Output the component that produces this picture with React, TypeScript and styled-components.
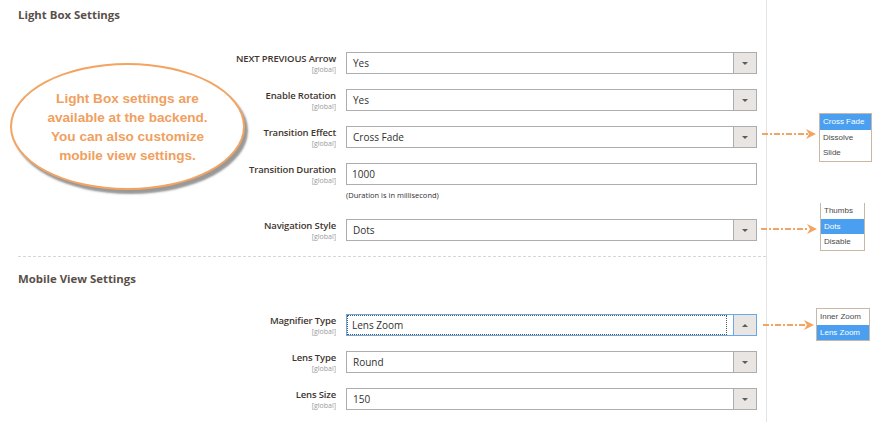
import React from 'react'
import styled, { createGlobalStyle, css } from 'styled-components'

const GlobalStyle = createGlobalStyle`
    html, body {
        margin: 0;
        padding: 0;
        background: #ffffff;
    }
    body {
        font-family: "Open Sans", "Liberation Sans", sans-serif;
        color: #303030;
    }
`;

const Page = styled.div`
    position: relative;
    width: 880px;
    height: 422px;
    overflow: hidden;
    display: flex;
`;

const Main = styled.div`
    width: 748px;
    height: 100%;
    padding-left: 18px;
    border-right: 1px solid #e4e4e4;
`;

const Section = styled.div<{ $divider?: boolean }>`
    padding-right: 9px;
    ${p => p.$divider && css`
        border-bottom: 1px dashed #d6d6d6;
        padding-bottom: 15px;
    `}
`;

const Heading = styled.h2<{ $pad: number; $gap: number }>`
    margin: 0 0 ${p => p.$gap}px 0;
    padding-top: ${p => p.$pad}px;
    font-size: 11.4px;
    line-height: 14px;
    font-weight: 700;
    color: #595049;
`;

const Rows = styled.div`
    display: flex;
    flex-direction: column;
    gap: 15px;
`;

const Row = styled.div`
    display: grid;
    grid-template-columns: 318px 411px;
    column-gap: 10px;
    align-items: start;
`;

const LabelBox = styled.div`
    display: flex;
    flex-direction: column;
    align-items: flex-end;
`;

const LabelText = styled.span`
    font-size: 9.5px;
    line-height: 13px;
    font-weight: 600;
    color: #41362f;
    letter-spacing: -0.15px;
`;

const Scope = styled.span`
    font-size: 7px;
    line-height: 9px;
    color: #9a9a9a;
`;

const Control = styled.div`
    display: flex;
    flex-direction: column;
`;

const SelectBox = styled.div<{ $focus?: boolean }>`
    height: 22px;
    box-sizing: border-box;
    display: flex;
    border: 1px solid ${p => (p.$focus ? '#6aa8e6' : '#adadad')};
    background: #ffffff;
`;

const Value = styled.div<{ $focus?: boolean }>`
    flex: 1;
    display: flex;
    align-items: center;
    padding-left: 6px;
    font-size: 10px;
    color: #303030;
    ${p => p.$focus && css`
        margin: 1px 7px 1px 1px;
        padding-left: 4px;
        outline: 1px dotted #555555;
    `}
`;

const ArrowButton = styled.div<{ $focus?: boolean }>`
    width: 22px;
    display: flex;
    align-items: center;
    justify-content: center;
    background: #e8e5e2;
    border-left: 1px solid ${p => (p.$focus ? '#6aa8e6' : '#adadad')};
`;

const Caret = styled.span<{ $up?: boolean }>`
    width: 0;
    height: 0;
    border-left: 3px solid transparent;
    border-right: 3px solid transparent;
    ${p => (p.$up
        ? css`border-bottom: 3px solid #5c5c5c;`
        : css`border-top: 3px solid #5c5c5c;`)}
`;

const InputBox = styled.div`
    height: 22px;
    box-sizing: border-box;
    display: flex;
    align-items: center;
    padding-left: 5px;
    border: 1px solid #adadad;
    font-size: 10px;
    color: #303030;
`;

const Note = styled.div`
    margin-top: 4px;
    margin-bottom: 3px;
    font-size: 7.5px;
    line-height: 12px;
    color: #303030;
`;

const Callout = styled.div`
    position: absolute;
    left: 10px;
    top: 63px;
    width: 231px;
    height: 123px;
    border: 2px solid #f3a462;
    border-radius: 50%;
    background: #ffffff;
    box-shadow: 3px 4px 2px rgba(70, 70, 70, 0.55);
    display: flex;
    align-items: center;
    justify-content: center;
    text-align: center;
    font-family: "Liberation Sans", Arial, sans-serif;
    font-weight: 700;
    font-size: 13.6px;
    line-height: 19px;
    color: #f0a060;
`;

const ListBox = styled.div<{ $left: number; $top: number; $width: number; $open?: boolean }>`
    position: absolute;
    left: ${p => p.$left}px;
    top: ${p => p.$top}px;
    width: ${p => p.$width}px;
    box-sizing: border-box;
    border: 1px solid #c9b8a6;
    ${p => p.$open && css`border-top: none;`}
    background: #ffffff;
    font-family: "Liberation Sans", Arial, sans-serif;
    font-size: 8px;
`;

const ListItem = styled.div<{ $active?: boolean }>`
    height: 15.5px;
    display: flex;
    align-items: center;
    padding-left: 3px;
    color: ${p => (p.$active ? '#ffffff' : '#4a4a4a')};
    background: ${p => (p.$active ? '#4a9ff0' : 'transparent')};
`;

const Pointer = styled.svg<{ $left: number; $top: number }>`
    position: absolute;
    left: ${p => p.$left}px;
    top: ${p => p.$top}px;
`;

type Field = {
    label: string
    value: string
    kind?: 'select' | 'input'
    note?: string
    focus?: boolean
}

const lightBox: Field[] = [
    { label: 'NEXT PREVIOUS Arrow', value: 'Yes' },
    { label: 'Enable Rotation', value: 'Yes' },
    { label: 'Transition Effect', value: 'Cross Fade' },
    { label: 'Transition Duration', value: '1000', kind: 'input', note: '(Duration is in millisecond)' },
    { label: 'Navigation Style', value: 'Dots' },
]

const mobile: Field[] = [
    { label: 'Magnifier Type', value: 'Lens Zoom', focus: true },
    { label: 'Lens Type', value: 'Round' },
    { label: 'Lens Size', value: '150' },
]

function FieldRow({ f }: { f: Field }) {
    return (
        <Row>
            <LabelBox>
                <LabelText>{f.label}</LabelText>
                <Scope>[global]</Scope>
            </LabelBox>
            <Control>
                {f.kind === 'input' ? (
                    <InputBox>{f.value}</InputBox>
                ) : (
                    <SelectBox $focus={f.focus}>
                        <Value $focus={f.focus}>{f.value}</Value>
                        <ArrowButton $focus={f.focus}>
                            <Caret $up={f.focus} />
                        </ArrowButton>
                    </SelectBox>
                )}
                {f.note && <Note>{f.note}</Note>}
            </Control>
        </Row>
    )
}

function Arrow({ left, top, length }: { left: number; top: number; length: number }) {
    const tip = length
    return (
        <Pointer $left={left} $top={top} width={length + 1} height={12}>
            <line x1={0} y1={6} x2={tip - 8} y2={6} stroke="#f2a462" strokeWidth={2} strokeDasharray="6 2 2 2" />
            <polygon points={`${tip - 10},1 ${tip},6 ${tip - 10},11 ${tip - 7},6`} fill="#f2a462" />
        </Pointer>
    )
}

function App() {
    return (
        <Page>
            <GlobalStyle />
            <Main>
                <Section $divider>
                    <Heading $pad={8} $gap={30}>Light Box Settings</Heading>
                    <Rows>
                        {lightBox.map((f, i) => <FieldRow key={i} f={f} />)}
                    </Rows>
                </Section>
                <Section>
                    <Heading $pad={15} $gap={28}>Mobile View Settings</Heading>
                    <Rows>
                        {mobile.map((f, i) => <FieldRow key={i} f={f} />)}
                    </Rows>
                </Section>
            </Main>

            <Callout>
                <div>
                    Light Box settings are<br />
                    available at the backend.<br />
                    You can also customize<br />
                    mobile view settings.
                </div>
            </Callout>

            <Arrow left={762} top={128} length={54} />
            <ListBox $left={819} $top={113} $width={53}>
                <ListItem $active>Cross Fade</ListItem>
                <ListItem>Dissolve</ListItem>
                <ListItem>Slide</ListItem>
            </ListBox>

            <Arrow left={761} top={223} length={56} />
            <ListBox $left={820} $top={203} $width={45} $open>
                <ListItem>Thumbs</ListItem>
                <ListItem $active>Dots</ListItem>
                <ListItem>Disable</ListItem>
            </ListBox>

            <Arrow left={763} top={319} length={51} />
            <ListBox $left={816} $top={308} $width={54}>
                <ListItem>Inner Zoom</ListItem>
                <ListItem $active>Lens Zoom</ListItem>
            </ListBox>
        </Page>
    )
}

export default App
